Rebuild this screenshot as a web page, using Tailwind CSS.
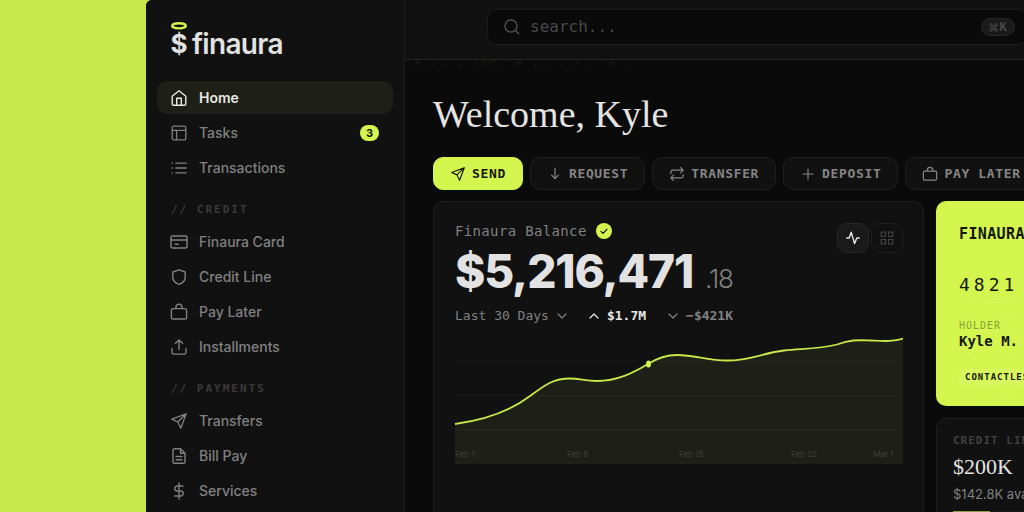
<!DOCTYPE html>
<html lang="en">
<head>
  <meta charset="UTF-8" />
  <meta name="viewport" content="width=device-width, initial-scale=1.0"/>
  <title>Finaura - Dashboard</title>
  <script src="https://cdn.jsdelivr.net/npm/@tailwindcss/browser@4"></script>
</head>
<body class="bg-[#c9e84a] font-['Inter',sans-serif] h-screen overflow-hidden pl-[146px]">

  <div class="flex w-[calc(100%+260px)] h-full bg-[#0a0a0a] rounded-tl-md overflow-hidden">

    <!-- Sidebar -->
    <aside class="w-[259px] shrink-0 bg-[#111111] border-r border-[#1f1f1f] px-[11px] overflow-hidden">
      <a href="#" class="flex items-start gap-1 h-[81px] pt-[21px] pl-[13px] text-[#e2e2e2]">
        <span class="flex flex-col items-center">
          <svg class="w-[18px] h-[9px]" viewBox="0 0 18 9" fill="none" stroke="#d4f54d" stroke-width="2.4"><ellipse cx="9" cy="4.8" rx="6.8" ry="2.6"/></svg>
          <span class="text-[26px] leading-7 font-bold">$</span>
        </span>
        <span class="pt-[5px] text-[28px] leading-9 font-semibold tracking-tight">finaura</span>
      </a>

      <nav class="flex flex-col gap-[2px] text-sm font-medium text-[#808080]">
        <a href="#" class="flex items-center gap-3 h-[33px] px-[14px] rounded-[10px] bg-[#1e1f16] text-[#e8e8e8] font-semibold">
          <svg class="w-4 h-4" viewBox="0 0 16 16" fill="none" stroke="currentColor" stroke-width="1.4" stroke-linecap="round" stroke-linejoin="round"><path d="M1.2 6.2 8 .8l6.8 5.4V14a1.3 1.3 0 0 1-1.3 1.3h-11A1.3 1.3 0 0 1 1.2 14z"/><path d="M5.7 15.2V8.2h4.6v7"/></svg>
          Home
        </a>
        <a href="#" class="flex items-center gap-3 h-[33px] px-[14px] rounded-[10px]">
          <svg class="w-4 h-4" viewBox="0 0 16 16" fill="none" stroke="currentColor" stroke-width="1.3" stroke-linejoin="round"><rect x="1.2" y="1.2" width="13.6" height="13.6" rx="1.6"/><path d="M1.2 5.4h13.6M5.6 5.4v9.4"/></svg>
          Tasks
          <span class="ml-auto w-[19px] h-4 rounded-full bg-[#d4f54d] text-[#111111] text-[11px] leading-4 font-bold text-center">3</span>
        </a>
        <a href="#" class="flex items-center gap-3 h-[33px] px-[14px] rounded-[10px]">
          <svg class="w-4 h-4" viewBox="0 0 16 16" fill="none" stroke="currentColor" stroke-width="1.3" stroke-linecap="round"><path d="M4.8 3.2h10.4M4.8 8h10.4M4.8 12.8h10.4M1 3.2h.4M1 8h.4M1 12.8h.4"/></svg>
          Transactions
        </a>
      </nav>

      <h2 class="pt-[18px] pb-[7px] pl-[14px] font-['DejaVu_Sans_Mono',monospace] text-[11px] leading-4 font-bold tracking-[2px] text-[#3a3a3a]">// CREDIT</h2>
      <nav class="flex flex-col gap-[2px] text-sm font-medium text-[#808080]">
        <a href="#" class="flex items-center gap-3 h-[33px] px-[14px] rounded-[10px]">
          <svg class="w-4 h-4 overflow-visible" viewBox="0 0 16 16" fill="none" stroke="currentColor" stroke-width="1.4" stroke-linecap="round" stroke-linejoin="round"><rect x="0" y="2" width="16" height="12" rx="1.4"/><path d="M0 6h16M4.2 10.2h3.2"/></svg>
          Finaura Card
        </a>
        <a href="#" class="flex items-center gap-3 h-[33px] px-[14px] rounded-[10px]">
          <svg class="w-4 h-4" viewBox="0 0 16 16" fill="none" stroke="currentColor" stroke-width="1.4" stroke-linejoin="round"><path d="M8 .8 14.2 3v5c0 3.7-2.6 6.2-6.2 7.3C4.4 14.2 1.8 11.7 1.8 8V3z"/></svg>
          Credit Line
        </a>
        <a href="#" class="flex items-center gap-3 h-[33px] px-[14px] rounded-[10px]">
          <svg class="w-4 h-4 overflow-visible" viewBox="0 0 16 16" fill="none" stroke="currentColor" stroke-width="1.4" stroke-linejoin="round"><rect x=".4" y="4.6" width="15.2" height="10.4" rx="1.6"/><path d="M4.9 4.6V3.3A3.1 3.1 0 0 1 8 .3a3.1 3.1 0 0 1 3.1 3v1.3"/></svg>
          Pay Later
        </a>
        <a href="#" class="flex items-center gap-3 h-[33px] px-[14px] rounded-[10px]">
          <svg class="w-4 h-4" viewBox="0 0 16 16" fill="none" stroke="currentColor" stroke-width="1.4" stroke-linecap="round" stroke-linejoin="round"><path d="M1 9.8v3.7c0 .9.7 1.6 1.6 1.6h10.8c.9 0 1.6-.7 1.6-1.6V9.8M8 10.5V1M4.5 4.3 8 .9l3.5 3.4"/></svg>
          Installments
        </a>
      </nav>

      <h2 class="pt-[18px] pb-[7px] pl-[14px] font-['DejaVu_Sans_Mono',monospace] text-[11px] leading-4 font-bold tracking-[2px] text-[#3a3a3a]">// PAYMENTS</h2>
      <nav class="flex flex-col gap-[2px] text-sm font-medium text-[#808080]">
        <a href="#" class="flex items-center gap-3 h-[33px] px-[14px] rounded-[10px]">
          <svg class="w-4 h-4" viewBox="0 0 16 16" fill="none" stroke="currentColor" stroke-width="1.3" stroke-linecap="round" stroke-linejoin="round"><path d="M15.2.8 9.8 15.2 6.8 9 .8 6.2zM15.2.8 6.8 9"/></svg>
          Transfers
        </a>
        <a href="#" class="flex items-center gap-3 h-[33px] px-[14px] rounded-[10px]">
          <svg class="w-4 h-4" viewBox="0 0 16 16" fill="none" stroke="currentColor" stroke-width="1.4" stroke-linecap="round" stroke-linejoin="round"><path d="M9.5.7H3.6C2.7.7 2 1.4 2 2.3v11.4c0 .9.7 1.6 1.6 1.6h8.8c.9 0 1.6-.7 1.6-1.6V5.2zM9.5.7v4.5H14M5 8.5h6M5 11.7h6"/></svg>
          Bill Pay
        </a>
        <a href="#" class="flex items-center gap-3 h-[33px] px-[14px] rounded-[10px]">
          <svg class="w-4 h-4 overflow-visible" viewBox="0 0 16 16" fill="none" stroke="currentColor" stroke-width="1.4" stroke-linecap="round" stroke-linejoin="round"><path d="M8 0v16M12 3H6.3a2.5 2.5 0 0 0 0 5h3.4a2.5 2.5 0 0 1 0 5H3.6"/></svg>
          Services
        </a>
      </nav>
    </aside>

    <div class="flex-1 min-w-0">
      <!-- Top bar -->
      <header class="flex items-start h-[60px] pl-[82px] pt-[9px] bg-[#111111] border-b border-[#222222]">
        <label class="flex items-center w-[541px] h-9 pl-4 pr-3 gap-[10px] rounded-[10px] bg-[#0a0a0a] border border-[#1c1c1c] text-[#505050]">
          <svg class="w-4 h-4 shrink-0" viewBox="0 0 16 16" fill="none" stroke="currentColor" stroke-width="1.4" stroke-linecap="round"><circle cx="7" cy="7" r="6"/><path d="m11.4 11.4 3.4 3.4"/></svg>
          <input type="text" aria-label="Search" placeholder="search..." class="flex-1 min-w-0 bg-transparent outline-none font-['DejaVu_Sans_Mono',monospace] text-base text-[#505050] placeholder:text-[#484848]">
          <kbd class="flex items-center justify-center gap-px w-[34px] h-[18px] rounded-full bg-[#1a1a1a] border border-[#262626] font-['DejaVu_Sans_Mono',monospace] text-xs leading-4 font-bold text-[#484848]">
            <svg class="w-[9px] h-[9px]" viewBox="0 0 9 9" fill="none" stroke="currentColor"><path d="M3 3h3v3H3zM3 3H1.8A1.2 1.2 0 1 1 3 1.8zM6 3V1.8A1.2 1.2 0 1 1 7.2 3zM6 6h1.2A1.2 1.2 0 1 1 6 7.2zM3 6v1.2A1.2 1.2 0 1 1 1.8 6z"/></svg>K
          </kbd>
        </label>
      </header>

      <main class="relative px-7 overflow-hidden">
        <pre aria-hidden="true" class="absolute left-0 -top-[7px] font-['DejaVu_Sans_Mono',monospace] text-sm leading-4 text-[#171712]">*# /. . /FR *# ,. . /. *# .</pre>

        <h1 class="pt-[30px] pb-[19px] font-['Liberation_Serif',serif] text-[38px] leading-12 text-[#e4e4e4]">Welcome, Kyle</h1>

        <!-- Actions -->
        <div class="flex gap-[7px] font-['DejaVu_Sans_Mono',monospace] text-[13px] leading-4 font-bold tracking-wider text-[#858585]">
          <button class="flex shrink-0 items-center gap-[7px] h-[33px] pl-[17px] pr-4 rounded-[10px] bg-[#d4f54d] border border-[#d4f54d] text-[#14160a]">
            <svg class="w-[14px] h-[14px]" viewBox="0 0 16 16" fill="none" stroke="currentColor" stroke-width="1.3" stroke-linejoin="round"><path d="M15.2.8 9.8 15.2 6.8 9 .8 6.2zM15.2.8 6.8 9"/></svg>
            SEND
          </button>
          <button class="flex shrink-0 items-center gap-[7px] h-[33px] pl-[17px] pr-4 rounded-[10px] bg-[#111111] border border-[#1f1f1f]">
            <svg class="w-[14px] h-[14px]" viewBox="0 0 14 14" fill="none" stroke="currentColor" stroke-width="1.2" stroke-linecap="round" stroke-linejoin="round"><path d="M7 1v10.5M3.6 8.2 7 11.6l3.4-3.4"/></svg>
            REQUEST
          </button>
          <button class="flex shrink-0 items-center gap-[7px] h-[33px] pl-[17px] pr-4 rounded-[10px] bg-[#111111] border border-[#1f1f1f]">
            <svg class="w-[14px] h-[14px]" viewBox="0 0 14 14" fill="none" stroke="currentColor" stroke-width="1.2" stroke-linecap="round" stroke-linejoin="round"><path d="m10.6.6 2.6 2.6-2.6 2.6M.8 6.4V5a1.8 1.8 0 0 1 1.8-1.8h10.4M3.4 13.4.8 10.8l2.6-2.6M13.2 7.6V9a1.8 1.8 0 0 1-1.8 1.8H1"/></svg>
            TRANSFER
          </button>
          <button class="flex shrink-0 items-center gap-[7px] h-[33px] pl-[17px] pr-4 rounded-[10px] bg-[#111111] border border-[#1f1f1f]">
            <svg class="w-[14px] h-[14px]" viewBox="0 0 14 14" fill="none" stroke="currentColor" stroke-width="1.2" stroke-linecap="round"><path d="M7 2v10M2 7h10"/></svg>
            DEPOSIT
          </button>
          <button class="flex shrink-0 items-center gap-[7px] h-[33px] pl-[17px] pr-4 rounded-[10px] bg-[#111111] border border-[#1f1f1f]">
            <svg class="w-[14px] h-[14px] overflow-visible" viewBox="0 0 16 16" fill="none" stroke="currentColor" stroke-width="1.4" stroke-linejoin="round"><rect x=".4" y="4.6" width="15.2" height="10.4" rx="1.6"/><path d="M4.9 4.6V3.3A3.1 3.1 0 0 1 8 .3a3.1 3.1 0 0 1 3.1 3v1.3"/></svg>
            PAY LATER
          </button>
        </div>

        <div class="grid grid-cols-[491fr_320fr] gap-3 pt-[11px]">
          <!-- Balance -->
          <section class="rounded-[10px] bg-[#111111] border border-[#1f1f1f] pl-[21px] pr-5 pt-[21px] pb-16">
            <div class="flex items-start justify-between">
              <div>
                <h2 class="flex items-center gap-[9px] font-['DejaVu_Sans_Mono',monospace] text-sm leading-4 tracking-wide text-[#808080]">
                  Finaura Balance
                  <svg class="w-4 h-4" viewBox="0 0 16 16" fill="none"><circle cx="8" cy="8" r="8" fill="#d4f54d"/><path d="m5 8.3 2.1 2.1L11 6.2" stroke="#111111" stroke-width="1.2" stroke-linecap="round" stroke-linejoin="round"/></svg>
                </h2>
                <p class="flex items-baseline gap-3 pt-2 text-[46px] leading-12 font-extrabold tracking-tight text-[#e2e2e2]">
                  $5,216,471
                  <span class="text-[26px] leading-none font-light text-[#808080]">.18</span>
                </p>
              </div>
              <div class="flex gap-[2px]">
                <button aria-label="Line view" class="flex items-center justify-center w-8 h-[30px] rounded-[10px] bg-[#1a1a1a] border border-[#262626] text-[#e8e8e8]">
                  <svg class="w-[14px] h-[14px]" viewBox="0 0 14 14" fill="none" stroke="currentColor" stroke-width="1.4" stroke-linecap="round" stroke-linejoin="round"><path d="M.8 7h2.4L5.2 1.2l3.4 11.4L10.8 7h2.4"/></svg>
                </button>
                <button aria-label="Grid view" class="flex items-center justify-center w-8 h-[30px] rounded-[10px] border border-[#1f1f1f] text-[#404040]">
                  <svg class="w-[14px] h-[14px]" viewBox="0 0 14 14" fill="none" stroke="currentColor" stroke-width="1.2"><path d="M1.2 1.2h4.3v4.3H1.2zM8.5 1.2h4.3v4.3H8.5zM1.2 8.5h4.3v4.3H1.2zM8.5 8.5h4.3v4.3H8.5z"/></svg>
                </button>
              </div>
            </div>

            <div class="flex items-center gap-[18px] pt-[13px] font-['DejaVu_Sans_Mono',monospace] text-[13px] leading-4 text-[#808080]">
              <button class="flex items-center gap-2">
                Last 30 Days
                <svg class="w-[10px] h-[10px]" viewBox="0 0 10 10" fill="none" stroke="currentColor" stroke-width="1.2" stroke-linecap="round" stroke-linejoin="round"><path d="m1 3 4 4 4-4"/></svg>
              </button>
              <span class="flex items-center gap-2 pl-1 font-bold text-[#e8e8e8]">
                <svg class="w-[10px] h-[10px]" viewBox="0 0 10 10" fill="none" stroke="currentColor" stroke-width="1.2" stroke-linecap="round" stroke-linejoin="round"><path d="m1 7 4-4 4 4"/></svg>
                $1.7M
              </span>
              <span class="flex items-center gap-2 pl-1 font-bold">
                <svg class="w-[10px] h-[10px]" viewBox="0 0 10 10" fill="none" stroke="currentColor" stroke-width="1.2" stroke-linecap="round" stroke-linejoin="round"><path d="m1 3 4 4 4-4"/></svg>
                −$421K
              </span>
            </div>

            <svg class="w-full h-[137px] mt-[3px]" viewBox="0 0 448 137" preserveAspectRatio="none" fill="none">
              <path d="M0 97C30 93 54 85 75 69C90 58 98 51.5 115 51.5C125 51.5 130 54 142 54C162 54 178 46 193 37C204 30 212 28 222 28C240 28 252 33.5 272 33.5C295 33.5 308 26 329 23.5C350 21.5 364 22 382 17.5C396 12.5 402 13 415 13.5S438 15 448 11.5V137H0Z" fill="#1e1f16"/>
              <path d="M0 34.5h448M0 68.5h448M0 102.5h448" stroke="#ffffff" stroke-opacity="0.03"/>
              <path d="M0 97C30 93 54 85 75 69C90 58 98 51.5 115 51.5C125 51.5 130 54 142 54C162 54 178 46 193 37C204 30 212 28 222 28C240 28 252 33.5 272 33.5C295 33.5 308 26 329 23.5C350 21.5 364 22 382 17.5C396 12.5 402 13 415 13.5S438 15 448 11.5" stroke="#c9e84a" stroke-width="1.8"/>
              <ellipse cx="193.5" cy="37" rx="2.4" ry="3.5" fill="#d4f54d"/>
              <g class="text-[8px]" fill="#40403c">
                <text x="0" y="130">Feb 1</text>
                <text x="112" y="130">Feb 8</text>
                <text x="224" y="130">Feb 15</text>
                <text x="336" y="130">Feb 22</text>
                <text x="418" y="130">Mar 1</text>
              </g>
            </svg>
          </section>

          <div class="flex flex-col gap-3">
            <!-- Card -->
            <section class="relative h-[205px] rounded-[10px] bg-[#d4f54d] px-[23px] pt-[23px] overflow-hidden font-['DejaVu_Sans_Mono',monospace] text-[#14160a]">
              <pre aria-hidden="true" class="absolute left-4 top-[94px] text-[11px] leading-[14px] text-[#d8f65e]"> ::/#+=##*+ ::/#+=
  *#. ./FR. *#. ./
 .:-.:##*+. .:-.:#
 ::/#+=##*+ ::/#+=
  *#. ./FR. *#. ./
 .:-.:##*+. .:-.:#
 ::/#+=##*+ ::/#+=
 *#. ./FR. *#. ./F</pre>
              <div class="relative">
                <h2 class="text-[15px] leading-5 font-bold tracking-wide">FINAURA</h2>
                <p class="pt-[29px] text-lg leading-6 tracking-[4px]">4821 7730 1946</p>
                <p class="pt-[22px] text-[10px] leading-[14px] tracking-[1px] text-[#8b9f3a]">HOLDER</p>
                <p class="text-sm leading-4 font-bold">Kyle M.</p>
                <span class="inline-block mt-5 px-[6px] h-4 rounded bg-[#d8f65e] text-[9px] leading-4 font-bold tracking-[1px]">CONTACTLESS</span>
              </div>
            </section>

            <!-- Credit line -->
            <section class="flex-1 rounded-[10px] bg-[#111111] border border-[#1f1f1f] px-4 pt-[14px]">
              <h2 class="font-['DejaVu_Sans_Mono',monospace] text-[11px] leading-4 font-bold tracking-[1px] text-[#404040]">CREDIT LINE</h2>
              <p class="pt-1 font-['Liberation_Serif',serif] text-[22px] leading-7 text-[#e4e4e4]">$200K</p>
              <p class="pt-[5px] text-[13px] leading-4 text-[#808080]">$142.8K available</p>
              <div class="h-1 mt-[9px] bg-[#1c1c1c]">
                <div class="h-1 bg-[#8fa040]" style="width: 13%"></div>
              </div>
            </section>
          </div>
        </div>
      </main>
    </div>
  </div>

</body>
</html>
